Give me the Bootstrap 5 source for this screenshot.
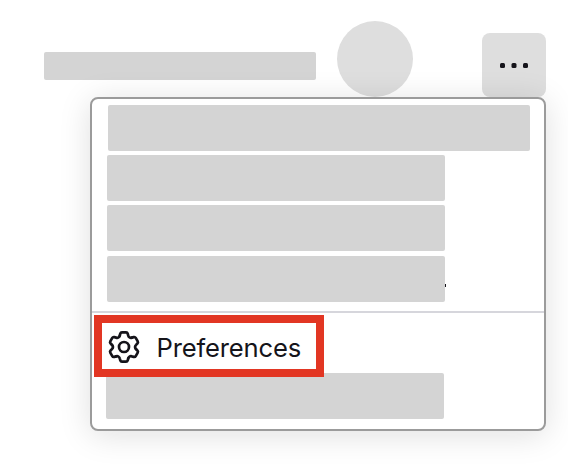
<!DOCTYPE html>
<html lang="en">
<head>
<meta charset="utf-8">
<meta name="viewport" content="width=device-width, initial-scale=1">
<title>Preferences menu</title>
<link href="https://cdn.jsdelivr.net/npm/bootstrap@5.3.0/dist/css/bootstrap.min.css" rel="stylesheet">
<style>
body{background:#fff;color:#15141a;font-family:Inter,"Liberation Sans",sans-serif;height:468px}
.topbar{height:97px;padding:0 22px 0 44px}
.address{width:272px;height:28px;margin-bottom:17px;background:#d4d4d4;border-radius:2px}
.avatar{width:76px;height:76px;margin-left:21px;background:#dedede}
.more{width:64px;height:64px;border-radius:8px;background:#dedede}
.panel{width:456px;height:334px;margin-left:90px;border:2px solid #9b9b9b;border-radius:8px;background:#fff;box-shadow:0 4px 32px rgba(12,12,13,.13)}
.block{width:338px;height:46px;background:#d4d4d4;border-radius:2px}
.upper{padding:6px 0 9px 15px;height:212px}
.first{width:422px;margin-left:1px;margin-bottom:4px}
.cut-row{margin-top:5px}
.speck{width:1px;height:3px;margin-top:13px;background:#15141a}
.rule{height:2px;background:#d6d6dc}
.pref{width:230px;height:62px;margin:2px 0 -4px 2px;border:8px solid #e23623;background:#fff;z-index:1;padding:2px 0 0 5px}
.pref-label{font-size:25.6px;line-height:32px;margin:2px 0 0 15.5px;letter-spacing:-.17px}
.last{margin-left:14px}
</style>
<script src="https://cdn.jsdelivr.net/npm/bootstrap@5.3.0/dist/js/bootstrap.bundle.min.js"></script>
</head>
<body class="overflow-hidden">
<header class="topbar d-flex align-items-end">
  <div class="address"></div>
  <div class="avatar rounded-circle"></div>
  <button class="more btn border-0 p-0 ms-auto" aria-label="More">
    <svg class="d-block" width="64" height="64" fill="#15141a"><rect x="18" y="30" width="5" height="5" rx="1.5"/><rect x="29.5" y="30" width="5" height="5" rx="1.5"/><rect x="41" y="30" width="5" height="5" rx="1.5"/></svg>
  </button>
</header>
<main class="panel position-relative">
  <div class="upper">
    <div class="block first"></div>
    <div class="block mb-1"></div>
    <div class="block"></div>
    <div class="cut-row d-flex align-items-center"><div class="block"></div><div class="speck"></div></div>
  </div>
  <div class="rule"></div>
  <div class="pref position-relative d-flex align-items-center">
    <svg width="34" height="34" viewBox="-17 -17 34 34" fill="none" stroke="#15141a" stroke-width="2.7" stroke-linecap="round" stroke-linejoin="round">
      <defs><path id="tooth" d="M-4.2-11.5L-3.7-13.3Q-3.3-14.7-2-14.7H2Q3.3-14.7 3.7-13.3L4.2-11.5C4.6-9.7 6.2-8.8 7.86-9.39"/></defs>
      <use href="#tooth"/><use href="#tooth" transform="rotate(60)"/><use href="#tooth" transform="rotate(120)"/><use href="#tooth" transform="rotate(180)"/><use href="#tooth" transform="rotate(240)"/><use href="#tooth" transform="rotate(300)"/>
      <circle r="5"/>
    </svg>
    <span class="pref-label">Preferences</span>
  </div>
  <div class="block last"></div>
</main>
</body>
</html>
